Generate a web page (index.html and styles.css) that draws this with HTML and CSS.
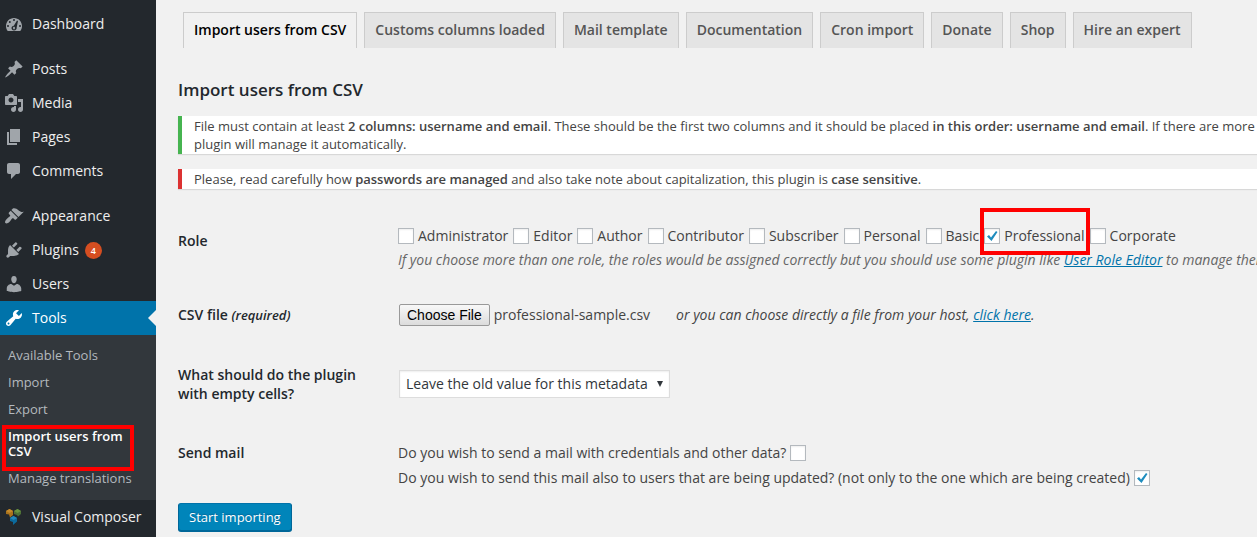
FILE: index.html
```html
<!DOCTYPE html>
<html lang="en">
<head>
<meta charset="utf-8">
<title>Import users from CSV</title>
<link rel="stylesheet" href="styles.css">
</head>
<body>
<div class="layout">
  <nav class="sidebar" aria-label="Admin menu">
    <ul class="menu">
      <li><a class="menu-item" href="#"><svg class="icon" viewBox="0 0 20 20"><path fill-rule="evenodd" d="M3.76 17h12.48c1.1-1.37 1.76-3.11 1.76-5 0-4.42-3.58-8-8-8s-8 3.58-8 8c0 1.89.66 3.63 1.76 5zM9 6a1 1 0 1 1 2 0a1 1 0 1 1-2 0zM4.800 8a1 1 0 1 1 2 0a1 1 0 1 1-2 0zM3 12a1 1 0 1 1 2 0a1 1 0 1 1-2 0zM15 12a1 1 0 1 1 2 0a1 1 0 1 1-2 0zM13 6.500l1 .6-1.300 6.200c.3 2-.9 3.200-2.700 3.200-1.400 0-2.500-1-2.500-2.400 0-1.200 1-2.200 2.300-2.300z"/><path d="M10 12.500l1 1-.3 1.700H9.300L9 13.500z"/></svg>Dashboard</a></li>
      <li class="group-start"><a class="menu-item" href="#"><svg class="icon" viewBox="0 0 20 20"><path d="M10.44 3.02l1.82-1.82 6.36 6.35-1.83 1.82c-1.05-.68-2.48-.57-3.41.36l-.75.75c-.92.93-1.04 2.35-.35 3.41l-1.83 1.82-2.41-2.41-2.8 2.79c-.42.42-3.38 2.71-3.8 2.29s1.86-3.39 2.28-3.81l2.79-2.79L4.1 9.36l1.83-1.82c1.05.69 2.48.57 3.4-.36l.75-.75c.93-.92 1.05-2.35.36-3.41z"/></svg>Posts</a></li>
      <li><a class="menu-item" href="#"><svg class="icon" viewBox="0 0 20 20"><path d="M13 11V4c0-.55-.45-1-1-1h-1.67L9 1H5L3.67 3H2c-.55 0-1 .45-1 1v7c0 .55.45 1 1 1h10c.55 0 1-.45 1-1zM7 4.5c1.38 0 2.5 1.12 2.5 2.5S8.38 9.5 7 9.5 4.5 8.38 4.5 7 5.62 4.5 7 4.5zM14 6h5v10.5c0 1.38-1.12 2.5-2.5 2.5S14 17.88 14 16.5s1.12-2.5 2.5-2.5c.17 0 .34.02.5.05V9h-3V6zm-4 8.05V13h2v3.5c0 1.38-1.12 2.5-2.5 2.5S7 17.88 7 16.5 8.12 14 9.5 14c.17 0 .34.02.5.05z"/></svg>Media</a></li>
      <li><a class="menu-item" href="#"><svg class="icon" viewBox="0 0 20 20"><path d="M6 15V2h10v13H6zm-1 1h8v2H3V5h2v11z"/></svg>Pages</a></li>
      <li><a class="menu-item" href="#"><svg class="icon" viewBox="0 0 20 20"><path d="M5 2h9c1.1 0 2 .9 2 2v7c0 1.1-.9 2-2 2h-2l-5 5v-5H5c-1.1 0-2-.9-2-2V4c0-1.1.9-2 2-2z"/></svg>Comments</a></li>
      <li class="group-start"><a class="menu-item" href="#"><svg class="icon" viewBox="0 0 20 20"><path d="M14.48 11.06L7.41 3.99l1.5-1.5c.5-.56 2.3-.47 3.51.32 1.21.8 1.43 1.28 2.91 2.1 1.18.64 2.45 1.26 4.45.85zm-.71.71L6.7 4.7 4.93 6.47c-.39.39-.39 1.02 0 1.41l1.06 1.06c.39.39.39 1.03 0 1.42-.6.6-1.43 1.11-2.21 1.69-.35.26-.7.53-1.01.84C1.43 14.23.4 16.08 1.4 17.07c.99 1 2.84-.03 4.18-1.36.31-.31.58-.66.85-1.02.57-.78 1.08-1.61 1.69-2.21.39-.39 1.02-.39 1.41 0l1.06 1.06c.39.39 1.02.39 1.41 0z"/></svg>Appearance</a></li>
      <li><a class="menu-item" href="#"><svg class="icon" viewBox="0 0 20 20"><path d="M13.11 4.36L9.87 7.6 8 5.73l3.24-3.24c.35-.34 1.05-.2 1.56.32.52.51.66 1.21.31 1.55zm-8 1.77l.91-1.12 9.01 9.01-1.19.84c-.71.71-2.63 1.16-3.82 1.16H6.14L4.9 17.26c-.59.59-1.54.59-2.12 0-.59-.58-.59-1.53 0-2.12l1.24-1.24v-3.88c0-1.13.4-3.19 1.09-3.89zm7.26 3.97l3.24-3.24c.34-.35 1.04-.21 1.55.31.52.51.66 1.21.31 1.55l-3.24 3.25z"/></svg>Plugins<span class="count">4</span></a></li>
      <li><a class="menu-item" href="#"><svg class="icon" viewBox="0 0 20 20"><path d="M10 9.25c-2.27 0-2.73-3.44-2.73-3.44C7 4.02 7.82 2 9.97 2c2.16 0 2.98 2.02 2.71 3.81 0 0-.41 3.44-2.68 3.44zm0 2.57L12.72 10c2.39 0 4.52 2.33 4.52 4.53v2.49s-3.65 1.13-7.24 1.13c-3.65 0-7.24-1.13-7.24-1.13v-2.49c0-2.25 1.94-4.48 4.47-4.48z"/></svg>Users</a></li>
      <li>
        <a class="menu-item current" href="#"><svg class="icon" viewBox="0 0 20 20"><path d="M16.68 9.77c-1.34 1.34-3.3 1.67-4.95.99l-5.41 6.52c-.99.99-2.59.99-3.58 0s-.99-2.59 0-3.57l6.52-5.42c-.68-1.65-.35-3.61.99-4.95 1.28-1.28 3.12-1.62 4.72-1.06l-2.89 2.89 2.82 2.82 2.86-2.87c.53 1.58.18 3.39-1.08 4.65zM3.81 16.21c.4.39 1.04.39 1.43 0 .4-.4.4-1.04 0-1.43-.39-.4-1.03-.4-1.43 0-.39.39-.39 1.03 0 1.43z"/></svg>Tools</a>
        <ul class="submenu">
          <li><a href="#">Available Tools</a></li>
          <li><a href="#">Import</a></li>
          <li><a href="#">Export</a></li>
          <li class="marked"><a class="active" href="#">Import users from CSV</a><span class="marker marker-menu"></span></li>
          <li><a href="#">Manage translations</a></li>
        </ul>
      </li>
      <li><a class="menu-item" href="#"><svg class="icon" viewBox="0 0 20 20"><path fill="#a8721c" d="M2 4l3.500-2L9 4v4l-3 2.500-1-3L2 7z"/><path fill="#c58a2c" d="M2 4l3.500-2L9 4 5.500 6z"/><path fill="#4c7036" d="M10 4l3.500-2L17 4v3l-3 2.500L13 8l-3-1z"/><path fill="#6b9440" d="M10 4l3.500-2L17 4l-3.500 2z"/><path fill="#0c6a9c" d="M6 11l3.500-2 3.500 2v3.500L9 18v-3l-3-1z"/><path fill="#2389bd" d="M6 11l3.500-2 3.500 2-3.500 2z"/></svg>Visual Composer</a></li>
    </ul>
  </nav>

  <main class="content">
    <nav class="tabs" aria-label="Sections">
      <a class="tab tab-active" href="#">Import users from CSV</a>
      <a class="tab" href="#">Customs columns loaded</a>
      <a class="tab" href="#">Mail template</a>
      <a class="tab" href="#">Documentation</a>
      <a class="tab" href="#">Cron import</a>
      <a class="tab" href="#">Donate</a>
      <a class="tab" href="#">Shop</a>
      <a class="tab" href="#">Hire an expert</a>
    </nav>

    <h2 class="title">Import users from CSV</h2>

    <div class="notice notice-ok">File must contain at least <strong>2 columns: username and email</strong>. These should be the first two columns and it should be placed <strong>in this order: username and email</strong>. If there are more<br>plugin will manage it automatically.</div>
    <div class="notice notice-error">Please, read carefully how <strong>passwords are managed</strong> and also take note about capitalization, this plugin is <strong>case sensitive</strong>.</div>

    <form class="form">
      <div class="row">
        <div class="row-label" id="role-label">Role</div>
        <div class="field" role="group" aria-labelledby="role-label">
          <div class="roles">
            <label class="check"><input type="checkbox">Administrator</label>
            <label class="check"><input type="checkbox">Editor</label>
            <label class="check"><input type="checkbox">Author</label>
            <label class="check"><input type="checkbox">Contributor</label>
            <label class="check"><input type="checkbox">Subscriber</label>
            <label class="check"><input type="checkbox">Personal</label>
            <label class="check"><input type="checkbox">Basic</label>
            <label class="check marked"><span class="box"><input type="checkbox" checked><svg class="tick" viewBox="0 0 16 16"><path d="M3 8.500L5 7l2 2.500L12 3l1.500 1-6 9z"/></svg></span>Professional<span class="marker marker-role"></span></label>
            <label class="check"><input type="checkbox">Corporate</label>
          </div>
          <p class="description">If you choose more than one role, the roles would be assigned correctly but you should use some plugin like <a href="#">User Role Editor</a> to manage them.</p>
        </div>
      </div>

      <div class="row">
        <div class="row-label">CSV file <em>(required)</em></div>
        <div class="field file-field">
          <button class="file-button" type="button">Choose File</button>
          <span class="file-name">professional-sample.csv</span>
          <em>or you can choose directly a file from your host, <a href="#">click here</a>.</em>
        </div>
      </div>

      <div class="row">
        <label class="row-label" for="empty-cells">What should do the plugin with empty cells?</label>
        <div class="field select-field">
          <span class="select-wrap">
            <select id="empty-cells"><option>Leave the old value for this metadata</option></select>
            <svg class="arrow" viewBox="0 0 6 6"><path d="M0 0h6L3 6z"/></svg>
          </span>
        </div>
      </div>

      <div class="row">
        <div class="row-label">Send mail</div>
        <div class="field mail-field">
          <label class="mail">Do you wish to send a mail with credentials and other data?<input type="checkbox"></label>
          <label class="mail">Do you wish to send this mail also to users that are being updated? (not only to the one which are being created)<span class="box"><input type="checkbox" checked><svg class="tick" viewBox="0 0 16 16"><path d="M3 8.500L5 7l2 2.500L12 3l1.500 1-6 9z"/></svg></span></label>
        </div>
      </div>

      <button class="submit" type="submit">Start importing</button>
    </form>
  </main>
</div>
</body>
</html>
```
FILE: styles.css
```css
* {
  box-sizing: border-box;
}

body {
  margin: 0;
  background: #f1f1f1;
  color: #444;
  font: 14px/20px "Open Sans", sans-serif;
}

a {
  color: #0073aa;
}

strong {
  font-weight: 600;
}

.layout {
  display: flex;
  min-height: 100vh;
}

/* Sidebar */

.sidebar {
  flex: 0 0 156px;
  background: #23282d;
}

.menu,
.submenu {
  margin: 0;
  padding: 0;
  list-style: none;
}

.menu {
  padding-top: 7px;
}

.group-start {
  margin-top: 11px;
}

.menu-item {
  position: relative;
  display: flex;
  align-items: center;
  height: 34px;
  padding-left: 4px;
  color: #eee;
  text-decoration: none;
}

.icon {
  width: 20px;
  height: 20px;
  margin-right: 8px;
  fill: #a0a5aa;
}

.current {
  background: #0073aa;
  color: #fff;
}

.current .icon {
  fill: #fff;
}

.current::after {
  content: "";
  position: absolute;
  right: 0;
  top: 9px;
  border: 8px solid transparent;
  border-left-width: 0;
  border-right-color: #f1f1f1;
}

.count {
  width: 17px;
  height: 17px;
  margin-left: 6px;
  border-radius: 50%;
  background: #d54e21;
  color: #fff;
  font-size: 9px;
  font-weight: 600;
  line-height: 17px;
  text-align: center;
}

.submenu {
  padding: 7px 0 8px;
  background: #32373c;
}

.submenu a {
  display: block;
  padding: 6px 8px;
  color: #b4b9be;
  font-size: 13px;
  line-height: 15px;
  text-decoration: none;
}

.submenu .active {
  padding-right: 24px;
  color: #fff;
  font-weight: 600;
}

/* Red highlight frames */

.marked {
  position: relative;
}

.marker {
  position: absolute;
  border: 4px solid #f00;
  pointer-events: none;
}

.marker-menu {
  inset: 2px 22px -6px 2px;
}

.marker-role {
  inset: -18px -5px -9px -4px;
}

/* Content */

.content {
  flex: 1;
  min-width: 0;
  padding: 12px 0 6px 22px;
  overflow: hidden;
}

.tabs {
  display: flex;
  gap: 7px;
  padding-left: 5px;
}

.tab {
  padding: 5px 10px 6px;
  border: 1px solid #ccc;
  border-bottom: 0;
  background: #e4e4e4;
  color: #555;
  font-size: 14px;
  font-weight: 600;
  line-height: 24px;
  white-space: nowrap;
  text-decoration: none;
}

.tab-active {
  background: #f1f1f1;
  color: #000;
}

.title {
  margin: 30px 0 14px;
  color: #23282d;
  font-size: 17px;
  font-weight: 600;
  line-height: 24px;
}

.notice {
  margin-bottom: 15px;
  padding: 1px 12px;
  border-left: 4px solid;
  background: #fff;
  box-shadow: 0 1px 1px rgba(0, 0, 0, 0.1);
  font-size: 13px;
  line-height: 18px;
  white-space: nowrap;
}

.notice-ok {
  border-color: #46b450;
}

.notice-error {
  border-color: #dc3232;
}

/* Form */

.form {
  margin-top: 22px;
}

.row {
  display: grid;
  grid-template-columns: 220px 1fr;
}

.row-label {
  padding: 20px 30px 20px 0;
  color: #23282d;
  font-weight: 600;
  line-height: 19px;
}

.row-label em {
  font-size: 13px;
}

.field {
  min-width: 0;
  padding: 15px 0;
  white-space: nowrap;
}

.roles {
  display: flex;
  gap: 5px;
}

.check {
  display: flex;
  align-items: center;
  gap: 4px;
}

input[type="checkbox"] {
  appearance: none;
  flex: none;
  display: block;
  width: 16px;
  height: 16px;
  margin: 0;
  border: 1px solid #b4b9be;
  background: #fff;
  box-shadow: inset 0 1px 2px rgba(0, 0, 0, 0.07);
}

.box {
  position: relative;
}

.tick {
  position: absolute;
  inset: 0;
  fill: #1e8cbe;
  pointer-events: none;
}

.description {
  margin: 4px 0 0;
  color: #666;
  font-style: italic;
}

.file-field,
.select-field {
  display: flex;
  align-items: center;
  padding-left: 1px;
}

.file-button {
  height: 22px;
  padding: 0 7px;
  border: 1px solid #999;
  border-radius: 2px;
  background: linear-gradient(#f8f8f8, #dcdcdc);
  color: #000;
  font: 14px "Liberation Sans", Arial, sans-serif;
}

.file-name {
  margin: 0 26px 0 4px;
}

.select-wrap {
  position: relative;
}

select {
  appearance: none;
  display: block;
  height: 28px;
  padding: 0 21px 0 6px;
  border: 1px solid #ddd;
  border-radius: 0;
  background: #fff;
  box-shadow: inset 0 1px 2px rgba(0, 0, 0, 0.07);
  color: #32373c;
  font: inherit;
}

.arrow {
  position: absolute;
  top: 11px;
  right: 7px;
  width: 6px;
  height: 6px;
  fill: #32373c;
  pointer-events: none;
}

.mail-field {
  display: grid;
  gap: 5px;
  padding: 20px 0 15px;
}

.mail {
  display: flex;
  align-items: center;
  gap: 4px;
}

.submit {
  display: block;
  height: 28px;
  padding: 0 10px;
  border: 1px solid #006799;
  border-top-color: #0073aa;
  border-radius: 3px;
  background: #0085ba;
  box-shadow: 0 1px 0 #006799;
  color: #fff;
  font: 13px/26px "Open Sans", sans-serif;
  text-shadow: 0 -1px 1px #006799;
}
```
